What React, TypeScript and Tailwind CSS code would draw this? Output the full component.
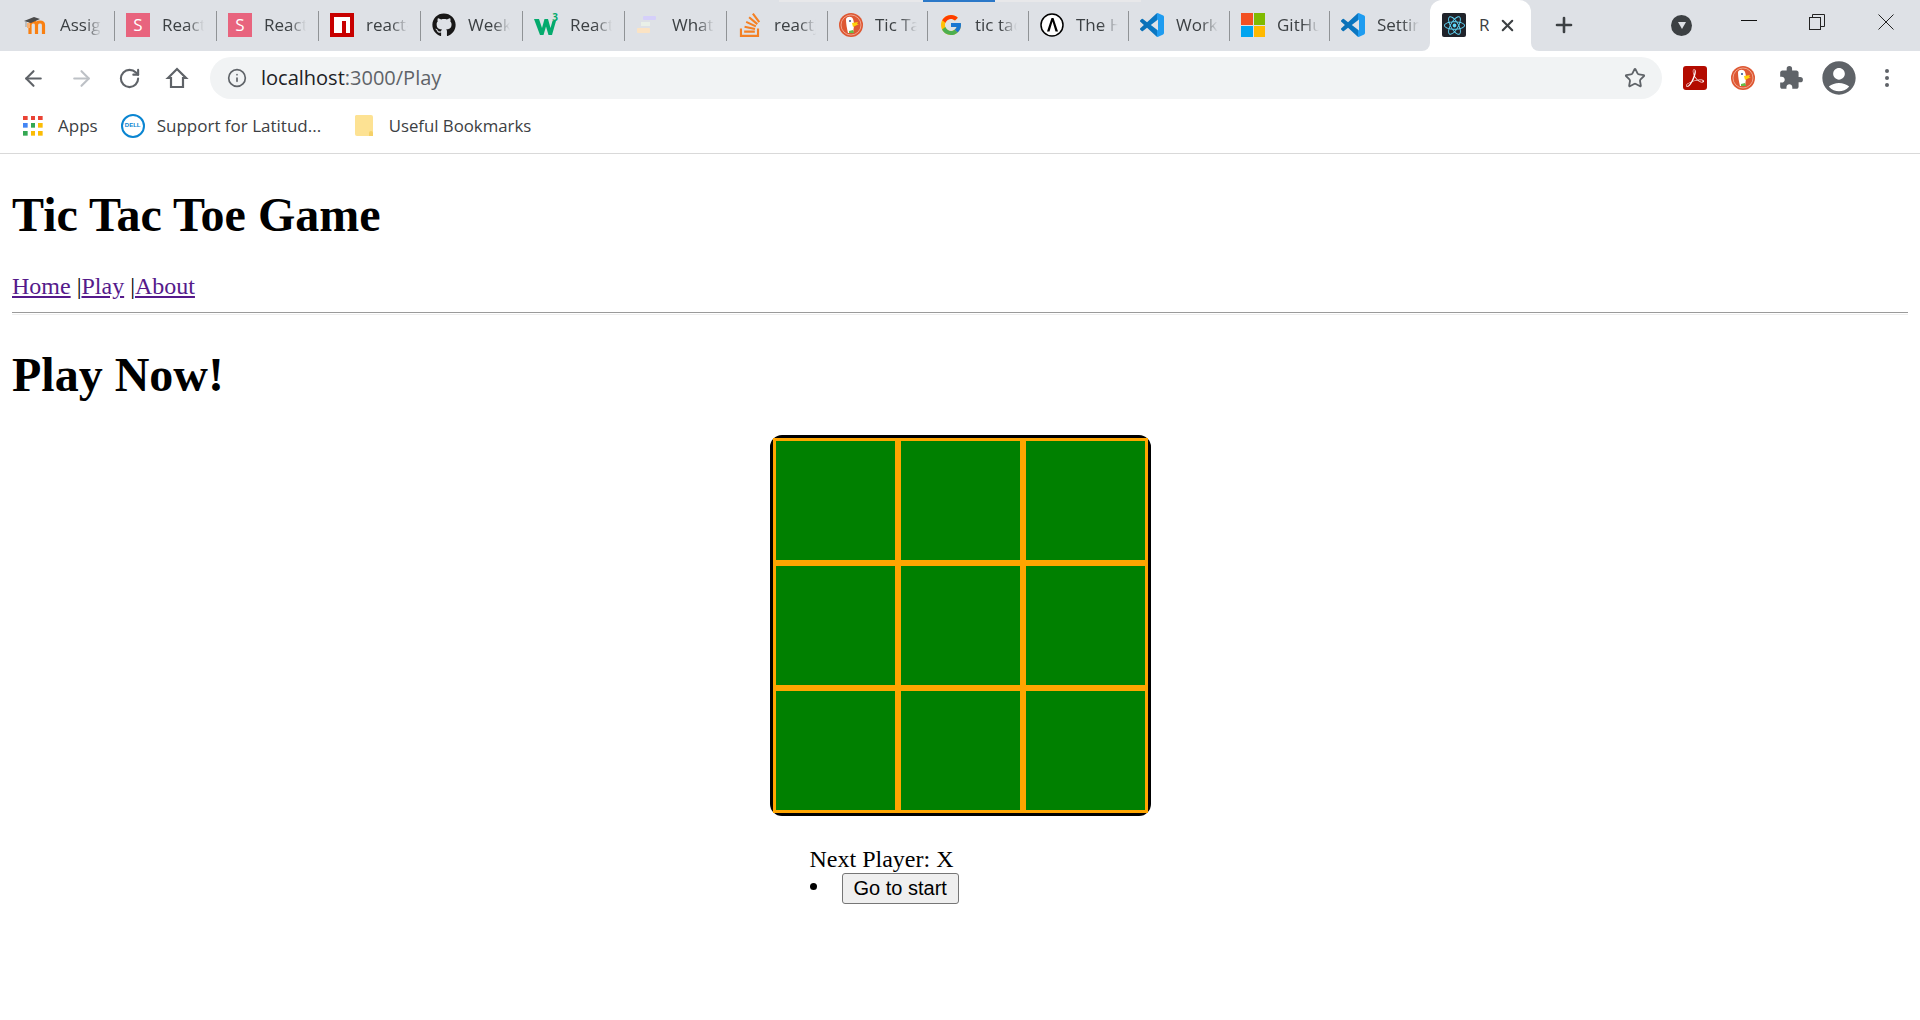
import React from "react";
import { ArrowLeft, ArrowRight, RotateCw, Info, Star, Plus, X } from "lucide-react";
import { FaGithub, FaReact } from "react-icons/fa";
import { FcGoogle } from "react-icons/fc";
import { SiStackoverflow, SiAdobeacrobatreader } from "react-icons/si";
import { MdExtension, MdAccountCircle } from "react-icons/md";

const VSCodeIcon = () => (
  <svg viewBox="0 0 24 24" className="w-6 h-6">
    <defs>
      <linearGradient id="vs" x1="0" x2="1" y1="0" y2="0">
        <stop offset="0" stopColor="#0a6fb5" />
        <stop offset="0.7" stopColor="#0a78c4" />
        <stop offset="0.72" stopColor="#1f9cf0" />
        <stop offset="1" stopColor="#1f9cf0" />
      </linearGradient>
    </defs>
    <path fill="url(#vs)" d="M23.15 2.587L18.21.21a1.494 1.494 0 0 0-1.705.29l-9.46 8.63-4.12-3.128a.999.999 0 0 0-1.276.057L.327 7.261A1 1 0 0 0 .326 8.74L3.899 12 .326 15.26a1 1 0 0 0 .001 1.479L1.65 17.94a.999.999 0 0 0 1.276.057l4.12-3.128 9.46 8.63a1.492 1.492 0 0 0 1.704.29l4.942-2.377A1.5 1.5 0 0 0 24 20.06V3.939a1.5 1.5 0 0 0-.85-1.352zm-5.146 14.861L10.826 12l7.178-5.448v10.896z" />
  </svg>
);

const MoodleIcon = () => (
  <svg viewBox="0 0 24 24" className="w-6 h-6">
    <path d="M6 21v-9c0-2 1.500-3 3.500-3s3 1 3 3v9M12.500 12c0-2 1.500-3 3.500-3s3.500 1 3.500 3v9" fill="none" stroke="#f98012" strokeWidth="3.200" />
    <path d="M0 8l10-4 6 2-9 4z" fill="#4a4a4a" />
    <path d="M2 9v5" stroke="#999" strokeWidth="1" />
    <path d="M4.500 10v5" stroke="#f9b070" strokeWidth="3" />
  </svg>
);

const SIcon = () => (
  <div className="w-6 h-6 bg-[#e8647e] text-white flex items-center justify-center text-[17px] font-['Open_Sans',sans-serif]">S</div>
);

const NpmIcon = () => (
  <svg viewBox="0 0 24 24" className="w-6 h-6">
    <rect width="24" height="24" fill="#c80000" />
    <path d="M4 4h16v16h-4V8h-4v12H4z" fill="#fff" />
  </svg>
);

const W3Icon = () => (
  <div className="w-6 h-6 relative">
    <svg viewBox="0 0 24 24" className="w-6 h-6">
      <path d="M0 6h5l3 9 2.500-9h3.500l2.500 9 2-7h3.500l-4 14h-3.500L12 13.500 9.500 22H6z" fill="#04aa6d" />
    </svg>
    <span className="absolute -top-[1px] right-0 text-[10px] leading-none text-[#04aa6d] font-bold font-['Open_Sans',sans-serif]">3</span>
  </div>
);

const BarsIcon = () => (
  <svg viewBox="0 0 24 24" className="w-6 h-6">
    <rect x="7" y="3" width="13" height="4" rx="1" fill="#d5cffa" />
    <rect x="5" y="9" width="9" height="4" fill="#e9f0e8" />
    <rect x="1" y="15" width="13" height="5" rx="1" fill="#fbe3c4" />
  </svg>
);

const DuckIcon = () => (
  <svg viewBox="0 0 24 24" className="w-6 h-6">
    <circle cx="12" cy="12" r="12" fill="#de5833" />
    <circle cx="12" cy="12" r="10" fill="none" stroke="#f4b8a4" strokeWidth="0.8" />
    <path d="M7 6c1-3 6-3 7 0 1 3 1 5 1 7l-1 7H9c-1-4-2-9-2-14z" fill="#fff" />
    <circle cx="11" cy="8" r="1" fill="#2d4f8e" />
    <path d="M13 10l6-1-1 2 2 0-6 3z" fill="#fdd20a" />
    <path d="M10 18l4-1 1 3H10z" fill="#65bc46" />
  </svg>
);

const AIcon = () => (
  <svg viewBox="0 0 24 24" className="w-6 h-6">
    <circle cx="12" cy="12" r="11" fill="#fff" stroke="#000" strokeWidth="1.500" />
    <path d="M7 18.500h2.500l3-10 3 10H18L13.500 5h-2z" fill="#000" />
  </svg>
);

const MsIcon = () => (
  <div className="w-6 h-6 grid grid-cols-2 grid-rows-2 gap-[1px]">
    <div className="bg-[#f25022]" />
    <div className="bg-[#7fba00]" />
    <div className="bg-[#00a4ef]" />
    <div className="bg-[#ffb900]" />
  </div>
);

const ReactFav = () => (
  <div className="w-6 h-6 rounded-[2px] bg-[#20232a] flex items-center justify-center text-[#61dafb]">
    <FaReact size={21} />
  </div>
);

const tabs = [
  { icon: <MoodleIcon />, label: "Assignment", w: "w-[102px]" },
  { icon: <SIcon />, label: "React Tic", w: "w-[102px]" },
  { icon: <SIcon />, label: "React Tic", w: "w-[102px]" },
  { icon: <NpmIcon />, label: "react-tic", w: "w-[102px]" },
  { icon: <FaGithub size={24} color="#181717" />, label: "Week 5", w: "w-[102px]" },
  { icon: <W3Icon />, label: "React Tic", w: "w-[102px]" },
  { icon: <BarsIcon />, label: "What is", w: "w-[102px]" },
  { icon: <SiStackoverflow size={24} color="#f48024" />, label: "reactjs", w: "w-[101px]" },
  { icon: <DuckIcon />, label: "Tic Tac", w: "w-[100px]" },
  { icon: <FcGoogle size={24} />, label: "tic tac", w: "w-[101px]" },
  { icon: <AIcon />, label: "The Hero", w: "w-[100px]" },
  { icon: <VSCodeIcon />, label: "Workspace", w: "w-[101px]" },
  { icon: <MsIcon />, label: "GitHub", w: "w-[100px]" },
  { icon: <VSCodeIcon />, label: "Settings", w: "w-[100px]" },
];

function Tab({ icon, label, w, last }: { icon: React.ReactNode; label: string; w: string; last: boolean }) {
  return (
    <div className={`${w} h-full shrink-0 relative flex items-center pl-[11px] pb-[1px]`}>
      <div className="w-6 h-6 shrink-0 flex items-center justify-center">{icon}</div>
      <div className="ml-3 w-[42px] overflow-hidden whitespace-nowrap text-[17px] text-[#3c4043] [mask-image:linear-gradient(to_right,black_60%,transparent)]">
        {label}
      </div>
      {!last && <span className="absolute right-0 top-[11px] h-[30px] w-[1px] bg-[#909396]" />}
    </div>
  );
}

const AppsIcon = () => {
  const c = ["#ea4335", "#ea4335", "#ea4335", "#4285f4", "#34a853", "#fbbc05", "#34a853", "#fbbc05", "#fbbc05"];
  return (
    <div className="w-5 h-5 grid grid-cols-3 gap-[3px]">
      {c.map((col, i) => (
        <svg key={i} viewBox="0 0 5 5" className="w-full h-full">
          <rect width="5" height="5" fill={col} />
        </svg>
      ))}
    </div>
  );
};

const DellIcon = () => (
  <div className="w-6 h-6 rounded-full border-2 border-[#0a85d1] flex items-center justify-center text-[6px] font-bold text-[#0a85d1] font-['Liberation_Sans',sans-serif]">
    DELL
  </div>
);

const FolderIcon = () => (
  <svg viewBox="0 0 18 22" className="w-[18px] h-[22px]">
    <path d="M1 0h15a2 2 0 0 1 2 2v19H2a2 2 0 0 1-2-2V1z" fill="#fde293" />
    <path d="M14 21v-3a2 2 0 0 1 4 0v3z" fill="#f5d168" />
  </svg>
);

const HomeIcon = () => (
  <svg viewBox="0 0 24 24" className="w-6 h-6" fill="none" stroke="#5f6368" strokeWidth="2.200">
    <path d="M3 12l9-9 9 9h-3v9H6v-9z" strokeLinejoin="miter" />
  </svg>
);

const ToolBox = ({ children }: { children: React.ReactNode }) => (
  <div className="w-12 h-full shrink-0 flex items-center justify-center">{children}</div>
);

function Browser() {
  return (
    <div className="font-['Open_Sans',sans-serif]">
      <div className="h-[51px] bg-[#dee1e6] relative flex items-stretch pl-[13px]">
        <div className="absolute top-0 left-[779px] w-[362px] h-[2px] bg-[#e8e8ea]" />
        <div className="absolute top-0 left-[923px] w-[72px] h-[2px] bg-[#2b78c8]" />
        {tabs.map((t, i) => (
          <Tab key={i} icon={t.icon} label={t.label} w={t.w} last={i === tabs.length - 1} />
        ))}
        <div className="w-[101px] shrink-0 bg-white rounded-t-[12px] relative flex items-center pl-3 pb-[1px]">
          <ReactFav />
          <div className="ml-[13px] w-[10px] overflow-hidden text-[17px] text-[#3c4043] whitespace-nowrap">React</div>
          <X size={19} strokeWidth={2.6} color="#3c4043" className="ml-[9px]" />
          <span className="absolute bottom-0 -left-2 w-2 h-2 bg-white">
            <span className="block w-2 h-2 bg-[#dee1e6] rounded-br-[8px]" />
          </span>
          <span className="absolute bottom-0 -right-2 w-2 h-2 bg-white">
            <span className="block w-2 h-2 bg-[#dee1e6] rounded-bl-[8px]" />
          </span>
        </div>
        <div className="ml-[21px] flex items-center pb-[1px]">
          <Plus size={24} strokeWidth={2.6} color="#3c4043" />
        </div>
        <div className="ml-[95px] flex items-center pb-[1px]">
          <div className="w-[21px] h-[21px] rounded-full bg-[#3c4043] flex items-center justify-center">
            <svg viewBox="0 0 10 10" className="w-[10px] h-[10px]">
              <path d="M1 2h8L5 9z" fill="#dee1e6" />
            </svg>
          </div>
        </div>
        <div className="ml-[49px] flex items-start pt-[20px]">
          <div className="w-4 h-[1px] bg-[#111]" />
        </div>
        <div className="ml-[52px] flex items-start pt-[14px]">
          <svg viewBox="0 0 16 16" className="w-[16px] h-[16px]" fill="none" stroke="#222" strokeWidth="1">
            <rect x="0.500" y="3.500" width="11" height="12" />
            <path d="M3.500 3.500V0.500h12v12h-4" />
          </svg>
        </div>
        <div className="ml-[53px] flex items-start pt-[14px]">
          <svg viewBox="0 0 16 16" className="w-[16px] h-[16px]" fill="none" stroke="#222" strokeWidth="1">
            <path d="M0.500 0.500l15 15M15.500 0.500l-15 15" />
          </svg>
        </div>
      </div>

      <div className="h-[52px] flex items-center pl-[9px] pt-[2px]">
        <ToolBox><ArrowLeft size={25} color="#5f6368" strokeWidth={2} /></ToolBox>
        <ToolBox><ArrowRight size={25} color="#bdc1c6" strokeWidth={2} /></ToolBox>
        <ToolBox><RotateCw size={23} color="#5f6368" strokeWidth={2.2} /></ToolBox>
        <ToolBox><HomeIcon /></ToolBox>
        <div className="ml-[9px] w-[1452px] h-[42px] rounded-full bg-[#f1f3f4] flex items-center pl-[17px] pr-[16px] shrink-0">
          <Info size={20} color="#5f6368" strokeWidth={2} />
          <div className="ml-[14px] text-[20px] text-[#202124] leading-none">
            localhost<span className="text-[#5f6368]">:3000/Play</span>
          </div>
          <Star size={22} color="#5f6368" strokeWidth={2} className="ml-auto" />
        </div>
        <div className="ml-[9px] flex h-full">
          <ToolBox>
            <div className="w-6 h-6 rounded-[3px] bg-[#b30b00] flex items-center justify-center">
              <SiAdobeacrobatreader size={18} color="#ffffff" />
            </div>
          </ToolBox>
          <ToolBox><DuckIcon /></ToolBox>
          <ToolBox><MdExtension size={26} color="#5f6368" /></ToolBox>
          <ToolBox><MdAccountCircle size={40} color="#5f6368" /></ToolBox>
          <ToolBox>
            <svg viewBox="0 0 6 22" className="w-[6px] h-[22px]" fill="#5f6368">
              <circle cx="3" cy="4" r="2" />
              <circle cx="3" cy="11" r="2" />
              <circle cx="3" cy="18" r="2" />
            </svg>
          </ToolBox>
        </div>
      </div>

      <div className="h-[51px] border-b border-[#d9d9d9] flex items-center pl-[23px] text-[17px] text-[#3c4043] pb-[5px]">
        <AppsIcon />
        <span className="ml-[15px]">Apps</span>
        <div className="ml-[23px]"><DellIcon /></div>
        <span className="ml-3 w-[165px] whitespace-nowrap">Support for Latitud...</span>
        <div className="ml-[33px]"><FolderIcon /></div>
        <span className="ml-4 text-[16.800px]">Useful Bookmarks</span>
      </div>
    </div>
  );
}

function Board() {
  return (
    <div className="mx-auto w-[381px] border-[3px] border-black rounded-[12px] grid grid-cols-3">
      {Array.from({ length: 9 }).map((_, i) => (
        <button key={i} className="w-[125px] h-[125px] bg-[#008000] border-[3px] border-[#ffa500]" />
      ))}
    </div>
  );
}

export default function App() {
  return (
    <div className="w-full h-[1020px] overflow-hidden bg-white">
      <Browser />
      <main className="px-3 text-[24px] leading-[27px] text-black font-['Liberation_Serif',serif]">
        <h1 className="text-[48px] font-bold leading-[55px] pt-[33px]">Tic Tac Toe Game</h1>
        <nav className="mt-[31px] whitespace-pre">
          <a href="#" className="underline text-[#551a8b]">Home</a> |<a href="#" className="underline text-[#551a8b]">Play</a> |<a href="#" className="underline text-[#551a8b]">About</a>
        </nav>
        <hr className="mt-[12px] border-t border-b border-t-[#9a9a9a] border-b-[#eeeeee] h-[3px]" />
        <h2 className="mt-[32px] text-[48px] font-bold leading-[55px]">Play Now!</h2>
        <div className="mt-[33px]">
          <Board />
          <div className="w-[381px] mx-auto pl-10 mt-[30px]">
            <div>Next Player: X</div>
            <ul className="list-disc list-inside">
              <li>
                <button className="font-['Liberation_Sans',sans-serif] text-[20px] leading-[23px] bg-[#efefef] border border-[#767676] rounded-[3px] px-[11px] py-[3px] align-middle">
                  Go to start
                </button>
              </li>
            </ul>
          </div>
        </div>
      </main>
    </div>
  );
}
